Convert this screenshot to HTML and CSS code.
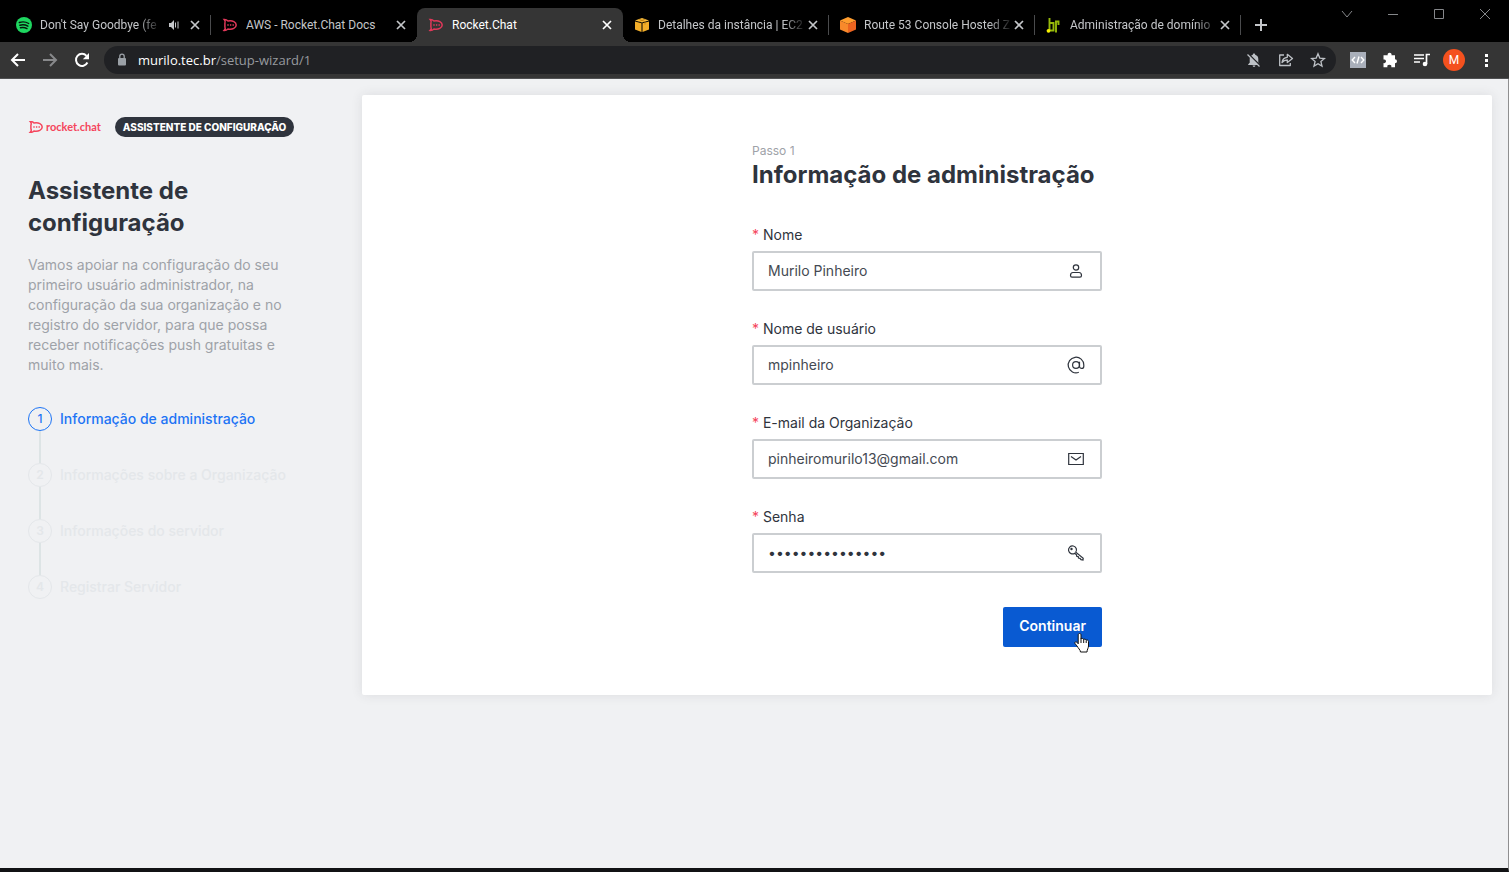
FILE: index.html
```html
<!DOCTYPE html>
<html lang="pt-BR">
<head>
<meta charset="utf-8">
<title>Rocket.Chat</title>
<link rel="stylesheet" href="styles.css">
</head>
<body>
<svg class="defs" aria-hidden="true">
  <symbol id="close" viewBox="0 0 12 12"><path d="M2 2l8 8M10 2l-8 8" fill="none" stroke="currentColor" stroke-width="1.700"/></symbol>
  <symbol id="rocket" viewBox="0 0 16 16"><path d="M2.200 2.500C4 2.400 5.200 3.200 6 4C10.800 3.200 14.200 5.200 14.200 8C14.200 10.800 10.600 12.800 6 12C5 12.900 3.600 13.500 2.200 13.400C3.400 12.200 3.500 11 2.900 9.900V6.100C3.500 5 3.300 3.700 2.200 2.500Z" fill="none" stroke="currentColor" stroke-width="1.500"/><path d="M5.300 8h1.400M7.900 8h1.400M10.500 8h1.400" stroke="currentColor" stroke-width="1.400"/></symbol>
</svg>
<header class="browser">
  <div class="tabstrip">
    <nav class="tabs" aria-label="Abas">
      <div class="tab">
        <svg class="favicon" viewBox="0 0 16 16"><circle cx="8" cy="8" r="8" fill="#1ed760"/><path d="M3.300 5.500c3-.9 6.700-.6 9.400 1M3.900 8.200c2.700-.7 5.600-.4 8 1M4.400 10.700c2.200-.5 4.600-.3 6.600.9" fill="none" stroke="#06150b" stroke-width="1.400" stroke-linecap="round"/></svg>
        <span class="tab-title faded">Don't Say Goodbye (fe</span>
        <svg class="audio" viewBox="0 0 12 12"><path d="M1 4h2l3-3v10L3 8H1z" fill="currentColor"/><path d="M7.500 3.500v5M10 2.500v7" stroke="currentColor" fill="none"/></svg>
        <button class="close" aria-label="Fechar"><svg viewBox="0 0 12 12"><use href="#close"/></svg></button>
      </div>
      <div class="tab no-line">
        <svg class="favicon rc"><use href="#rocket"/></svg>
        <span class="tab-title">AWS - Rocket.Chat Docs</span>
        <button class="close" aria-label="Fechar"><svg viewBox="0 0 12 12"><use href="#close"/></svg></button>
      </div>
      <div class="tab active">
        <svg class="favicon rc"><use href="#rocket"/></svg>
        <span class="tab-title">Rocket.Chat</span>
        <button class="close" aria-label="Fechar"><svg viewBox="0 0 12 12"><use href="#close"/></svg></button>
      </div>
      <div class="tab">
        <svg class="favicon" viewBox="0 0 16 16"><path d="M1 4.500l6.500 1.800V15L1 12.600zM15 4.500L8.500 6.300V15L15 12.600z" fill="#f3ae29"/><path d="M1 3.500L8 1l7 2.500L8 5.400z" fill="#f9bd3c"/><path d="M5 2.200l6 2.400v3M11 2.200L5 4.600" stroke="#b87910" stroke-width=".7" fill="none"/></svg>
        <span class="tab-title faded">Detalhes da instância | EC2</span>
        <button class="close" aria-label="Fechar"><svg viewBox="0 0 12 12"><use href="#close"/></svg></button>
      </div>
      <div class="tab">
        <svg class="favicon" viewBox="0 0 16 16"><path d="M8 0l8 3.500L8 7 0 3.500z" fill="#ff9d2e"/><path d="M0 3.500L8 7v9l-8-3.500z" fill="#f8892b"/><path d="M16 3.500L8 7v9l8-3.500z" fill="#ec6420"/></svg>
        <span class="tab-title faded">Route 53 Console Hosted Z</span>
        <button class="close" aria-label="Fechar"><svg viewBox="0 0 12 12"><use href="#close"/></svg></button>
      </div>
      <div class="tab">
        <svg class="favicon" viewBox="0 0 16 16"><path d="M3.500 1v12.500M3.500 6H7.500v7.500H3M10 15.500V4M12.500 8V4.500H9" fill="none" stroke="#95b80a" stroke-width="1.900"/><circle cx="2.500" cy="13.800" r="1.900" fill="#f6f000"/></svg>
        <span class="tab-title faded">Administração de domínio</span>
        <button class="close" aria-label="Fechar"><svg viewBox="0 0 12 12"><use href="#close"/></svg></button>
      </div>
      <button class="new-tab" aria-label="Nova aba"><svg viewBox="0 0 12 12"><path d="M6 0v12M0 6h12" stroke="currentColor" stroke-width="2"/></svg></button>
    </nav>
    <div class="window-controls">
      <button aria-label="Pesquisar abas"><svg viewBox="0 0 12 12"><path d="M1 3l5 6 5-6"/></svg></button>
      <button aria-label="Minimizar"><svg viewBox="0 0 12 12"><path d="M1 6.500h10"/></svg></button>
      <button aria-label="Maximizar"><svg viewBox="0 0 12 12"><path d="M1.500 1.500h9v9h-9z"/></svg></button>
      <button aria-label="Fechar janela"><svg viewBox="0 0 12 12"><path d="M1 1l10 10M11 1L1 11"/></svg></button>
    </div>
  </div>
  <div class="toolbar">
    <button class="tool" aria-label="Voltar"><svg viewBox="0 0 16 16"><path d="M15 8H2M8 2L2 8l6 6" fill="none" stroke="#fff" stroke-width="2"/></svg></button>
    <button class="tool" aria-label="Avançar"><svg viewBox="0 0 16 16"><path d="M1 8h13M8 2l6 6-6 6" fill="none" stroke="#88898b" stroke-width="2"/></svg></button>
    <button class="tool" aria-label="Recarregar"><svg viewBox="0 0 16 16"><path d="M13.400 10.500A6 6 0 1 1 12.500 3.900" fill="none" stroke="#fff" stroke-width="2"/><path d="M15 1v6.200H8.800z" fill="#fff"/></svg></button>
    <div class="omnibox">
      <svg class="lock" viewBox="0 0 12 14"><path d="M3 5h6a1 1 0 0 1 1 1v5.500a1 1 0 0 1-1 1H3a1 1 0 0 1-1-1V6a1 1 0 0 1 1-1z" fill="#9aa0a6"/><path d="M3.800 5.500V3.300a2.200 2.200 0 0 1 4.400 0v2.200" fill="none" stroke="#9aa0a6" stroke-width="1.300"/></svg>
      <span class="url"><b>murilo.tec.br</b>/setup-wizard/1</span>
      <button class="tool" aria-label="Notificações bloqueadas"><svg viewBox="0 0 16 16"><path d="M8 1.500c.7 0 1.200.5 1.200 1.200C11.300 3.300 12.300 5 12.300 7v3.800l1.500 1.400v.8H2.200v-.8l1.500-1.400V7c0-2 1-3.700 3.100-4.300 0-.7.5-1.200 1.200-1.200zM6.600 13.500h2.800a1.400 1.400 0 0 1-2.800 0z" fill="#bdc1c6"/><path d="M1.800 1.200l13.400 13.400" stroke="#202124" stroke-width="1.500"/><path d="M1.500 2.500l12 12" stroke="#bdc1c6" stroke-width="1.300"/></svg></button>
      <button class="tool" aria-label="Compartilhar"><svg viewBox="0 0 16 16"><path d="M6 3H1.700v10.500h10.600V11M4 10.500C4.500 7.200 6.500 5.500 9.300 5.300V2.300L14.500 6.500 9.300 10.500V8C7 8 5.300 8.800 4 10.500z" fill="none" stroke="#bdc1c6" stroke-width="1.300" stroke-linejoin="round"/></svg></button>
      <button class="tool" aria-label="Favoritar"><svg viewBox="0 0 16 16"><path d="M8 1.800l1.800 4.300 4.700.4-3.600 3 1.100 4.600L8 11.700l-4 2.400 1.100-4.600-3.600-3 4.700-.4z" fill="none" stroke="#bdc1c6" stroke-width="1.300"/></svg></button>
    </div>
    <button class="tool" aria-label="Extensão de código"><svg viewBox="0 0 16 16"><path d="M0 0h16v16H0z" fill="#a9afba"/><path d="M5 5L2.200 8 5 11M11 5l2.800 3L11 11M9 4.500l-2 7" fill="none" stroke="#fff" stroke-width="1.400"/></svg></button>
    <button class="tool" aria-label="Extensões"><svg viewBox="0 0 16 16"><path d="M1.500 3.300h4.200a2 2 0 1 1 3.800 0h3.500v4a2 2 0 1 1 0 4v4H9.300a2 2 0 1 0-3.900 0H1.500v-4.200a1.900 1.900 0 1 0 0-3.600z" fill="#fff"/></svg></button>
    <button class="tool" aria-label="Controle de mídia"><svg viewBox="0 0 16 16"><path d="M0 3h10M0 6.500h10M0 10h6M12.500 12V2.500H16" fill="none" stroke="#fff" stroke-width="1.700"/><circle cx="11" cy="12" r="2.300" fill="#fff"/></svg></button>
    <button class="avatar" aria-label="Perfil">M</button>
    <button class="tool" aria-label="Menu"><svg viewBox="0 0 16 16"><path d="M7 2h3v3H7zM7 7h3v3H7zM7 12h3v3H7z" fill="#fff"/></svg></button>
  </div>
</header>
<main class="page">
  <aside class="sidebar">
    <div class="brand">
      <div class="logo"><svg viewBox="0 2 16 12"><use href="#rocket" width="16" height="16"/></svg><span>rocket.chat</span></div>
      <span class="pill">ASSISTENTE DE CONFIGURAÇÃO</span>
    </div>
    <h1>Assistente de configuração</h1>
    <p class="intro">Vamos apoiar na configuração do seu primeiro usuário administrador, na configuração da sua organização e no registro do servidor, para que possa receber notificações push gratuitas e muito mais.</p>
    <ol class="steps">
      <li class="current"><span class="num">1</span><span class="step-label">Informação de administração</span></li>
      <li><span class="num">2</span><span class="step-label">Informações sobre a Organização</span></li>
      <li><span class="num">3</span><span class="step-label">Informações do servidor</span></li>
      <li><span class="num">4</span><span class="step-label">Registrar Servidor</span></li>
    </ol>
  </aside>
  <section class="card">
    <form class="form">
      <p class="step-name">Passo 1</p>
      <h2>Informação de administração</h2>
      <div class="field">
        <label for="name"><span class="star">*</span> Nome</label>
        <div class="box"><input id="name" type="text" value="Murilo Pinheiro"><svg viewBox="0 0 20 20"><circle cx="10" cy="6.500" r="2.700"/><path d="M7 11.500h6c1.500 0 2.500 1.300 2.500 3 0 1-.6 1.600-1.500 1.600H6c-.9 0-1.500-.6-1.500-1.600 0-1.700 1-3 2.500-3z"/></svg></div>
      </div>
      <div class="field">
        <label for="user"><span class="star">*</span> Nome de usuário</label>
        <div class="box"><input id="user" type="text" value="mpinheiro"><svg viewBox="0 0 20 20"><path d="M12.800 17.300A7.800 7.800 0 1 1 17.800 10v1.200c0 3-4.300 3-4.300 0V6.700"/><circle cx="10" cy="10" r="3.400"/></svg></div>
      </div>
      <div class="field">
        <label for="email"><span class="star">*</span> E-mail da Organização</label>
        <div class="box"><input id="email" type="email" value="pinheiromurilo13@gmail.com"><svg viewBox="0 0 20 20"><path d="M2.700 4.500h14.600v11H2.700zM5 7.500l5 3.500 5-3.500"/></svg></div>
      </div>
      <div class="field">
        <label for="pass"><span class="star">*</span> Senha</label>
        <div class="box"><input id="pass" type="password" value="abcdefghijklmno"><svg viewBox="0 0 20 20"><path d="M9.800 9.200A4 4 0 1 0 8.800 10.200L10.500 11.800 10.700 13.300 12.200 13.600 12.500 15 14 15.300 15 16.700 17 17 17.200 15.200z"/><circle cx="5.500" cy="6" r=".6"/></svg></div>
      </div>
      <div class="actions">
        <button class="continue" type="button">Continuar</button>
        <svg class="cursor" viewBox="0 0 16 21"><path d="M5.500 1.500c1 0 1.500.6 1.500 1.500v4c0-.9 2.500-.9 2.700.6.500-.8 2.300-.5 2.500.7.600-.7 2.300-.3 2.300 1.200v4.500c0 2-1.500 3.500-1.500 6H6.500c0-2-2.500-4-3.500-6L1 11.500c-.8-1.400 1-2.300 2-1.200l1.200 1.500V3c0-.9.500-1.500 1.300-1.500z" fill="#fff" stroke="#111" stroke-width="1"/><path d="M7 6.500V11M9.700 7.500V11M12.200 8.500V11" stroke="#111"/></svg>
      </div>
    </form>
  </section>
</main>
</body>
</html>
```
FILE: styles.css
```css
* { box-sizing: border-box; }
body {
  margin: 0;
  min-height: 100vh;
  display: flex;
  flex-direction: column;
  background: #f0f1f3;
  font-family: Inter, "Liberation Sans", sans-serif;
  color: #2f343d;
}
button { margin: 0; padding: 0; border: 0; background: none; color: inherit; font: inherit; }
svg { display: block; flex: none; }
h1, h2, p, ol { margin: 0; padding: 0; }
.defs { position: absolute; width: 0; height: 0; }

.browser { font-family: "Open Sans", "Noto Sans", sans-serif; font-size: 12px; }
.tabstrip { display: flex; justify-content: space-between; height: 42px; background: #000; color: #c4c6c9; }
.tabs { display: flex; align-items: flex-end; flex: 1; min-width: 0; padding-left: 5px; }
.tab {
  position: relative;
  display: flex;
  align-items: center;
  flex: 0 1 206px;
  min-width: 0;
  height: 34px;
  padding: 0 10px 0 11px;
}
.tab:not(.active, .no-line)::after {
  content: "";
  position: absolute;
  right: 0;
  top: 7px;
  width: 1px;
  height: 20px;
  background: #4a4b4d;
}
.tab.active { background: #353535; border-radius: 8px 8px 0 0; color: #fff; }
.tab.active::before, .tab.active::after {
  content: "";
  position: absolute;
  bottom: 0;
  width: 8px;
  height: 8px;
}
.tab.active::before { left: -8px; background: radial-gradient(circle at 0 0, transparent 8px, #353535 8px); }
.tab.active::after { right: -8px; background: radial-gradient(circle at 100% 0, transparent 8px, #353535 8px); }
.favicon { width: 16px; height: 16px; margin-right: 8px; }
.rc { color: #e2385a; }
.tab-title { flex: 1; min-width: 0; overflow: hidden; white-space: nowrap; font-family: Roboto, sans-serif; line-height: 20px; }
.faded { -webkit-mask-image: linear-gradient(to left, transparent, #000 24px); mask-image: linear-gradient(to left, transparent, #000 24px); }
.audio { width: 12px; height: 12px; margin: 0 9px 0 6px; }
.close, .close svg { width: 12px; height: 12px; }
.new-tab { display: grid; place-items: center; width: 28px; height: 34px; margin-left: 6px; }
.new-tab svg { width: 12px; height: 12px; }
.window-controls { display: flex; padding-right: 1px; color: #85878a; }
.window-controls button { display: grid; place-items: center; width: 46px; height: 28px; }
.window-controls svg { width: 12px; height: 12px; fill: none; stroke: currentColor; stroke-width: 1; }

.toolbar { display: flex; align-items: center; height: 37px; padding: 0 7px 0 2px; background: #353535; border-bottom: 1px solid #505153; }
.tool { display: grid; place-items: center; width: 32px; height: 28px; flex: none; }
.tool svg { width: 16px; height: 16px; }
.omnibox {
  display: flex;
  align-items: center;
  flex: 1;
  min-width: 0;
  height: 28px;
  margin: 0 6px;
  padding: 0 2px 0 12px;
  border-radius: 14px;
  background: #202124;
}
.lock { width: 12px; height: 14px; }
.url { flex: 1; margin-left: 10px; color: #979a9f; font-size: 13px; line-height: 20px; }
.url b { color: #fff; font-weight: 400; }
.avatar { width: 22px; height: 22px; margin: 0 5px; border-radius: 50%; background: #f4511e; color: #fff; font-family: Roboto, sans-serif; line-height: 22px; text-align: center; }

.page { flex: 1; display: flex; align-items: flex-start; padding: 16px 16px 16px 0; border-right: 1px solid #8f8f90; border-bottom: 4px solid #111214; }
.sidebar { flex: none; width: 362px; padding: 22px 70px 0 28px; }
.brand { display: flex; align-items: center; gap: 14px; white-space: nowrap; }
.logo { display: flex; align-items: center; gap: 2px; width: 74px; color: #f5455c; font: 700 11px/20px Lato, sans-serif; }
.logo svg { width: 16px; height: 12px; }
.pill { padding: 0 8px; border-radius: 10px; background: #2f343d; color: #fff; font-size: 10px; font-weight: 800; line-height: 20px; }
h1, h2 { font-size: 24px; line-height: 32px; font-weight: 700; }
h1 { margin-top: 38px; }
.intro { margin-top: 16px; color: #9ea2a8; font-size: 14px; line-height: 20px; }
.steps { margin-top: 32px; list-style: none; }
.steps li { position: relative; display: flex; align-items: flex-start; gap: 8px; height: 24px; margin-bottom: 32px; color: #e4e7ea; font-size: 14px; font-weight: 500; white-space: nowrap; }
.steps li:not(:last-child)::after { content: ""; position: absolute; left: 11px; top: 24px; width: 2px; height: 32px; background: #dde4e5; }
.num { width: 24px; height: 24px; border: 1px solid; border-radius: 50%; font-size: 12px; font-weight: 600; line-height: 22px; text-align: center; }
.step-label { line-height: 23px; }
.steps .current { color: #1d74f5; }
.current .num { font-weight: 500; }

.card { flex: 1; display: flex; justify-content: center; padding: 48px 16px; border-radius: 2px; background: #fff; box-shadow: 0 0 12px rgba(47, 52, 61, 0.1); }
.form { width: 350px; }
.step-name { color: #9ea2a8; font-size: 12px; line-height: 16px; }
.form h2 { white-space: nowrap; margin-bottom: 34px; }
.field { margin-bottom: 28px; }
.field label { display: block; margin-bottom: 6px; font-size: 14px; line-height: 20px; }
.star { color: #f5455c; }
.box { display: flex; align-items: center; height: 40px; padding: 0 14px; border: 2px solid #cbced1; border-radius: 2px; }
.box input { flex: 1; min-width: 0; height: 36px; padding: 0 0 2px; border: 0; outline: 0; background: none; color: #444952; font: 14px/20px Inter, sans-serif; }
.box input[type="password"] { color: #2f343d; }
.box svg { width: 20px; height: 20px; fill: none; stroke: #2f343d; stroke-width: 1.2; }
.actions { position: relative; display: flex; justify-content: flex-end; margin-top: 34px; }
.continue { height: 40px; padding: 0 16px 2px; border-radius: 2px; background: #095ad2; color: #fff; font-size: 14px; font-weight: 600; line-height: 20px; }
.cursor { position: absolute; right: 12px; top: 25px; width: 16px; height: 21px; }
```
